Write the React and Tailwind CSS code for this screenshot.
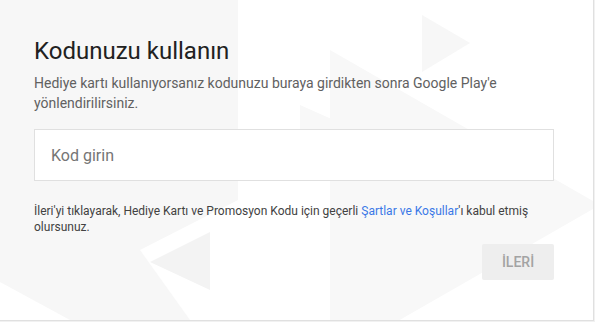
import React from "react";

// faint play-style triangles behind the card content
function CardPattern() {
  return (
    <svg
      aria-hidden
      className="pointer-events-none absolute inset-0 h-full w-full"
      viewBox="0 0 593 320"
      preserveAspectRatio="none"
    >
      <rect width="593" height="320" fill="#ffffff" />
      <polygon points="0,0 238,0 238,320 70,320 0,282" fill="#f7f7f7" />
      <polygon points="238,0 380,17 238,90" fill="#ffffff" />
      <polygon points="140,250 238,200 238,320 190,320" fill="#ffffff" />
      <polygon points="330,50 600,205 330,360" fill="#f8f8f8" />
      <polygon points="422,15 470,43 422,72" fill="#f7f7f7" />
      <polygon points="300,105 345,125 300,150" fill="#f8f8f8" />
      <polygon points="150,262 210,232 210,290" fill="#f3f3f3" />
    </svg>
  );
}

export default function App() {
  return (
    <div
      className="h-[322px] w-[595px] overflow-hidden bg-[#f1f1f1]"
      style={{ fontFamily: "Roboto, 'Noto Sans', sans-serif" }}
    >
      <div className="relative h-[321px] w-[594px] border-b border-r border-[#e0e0e0]">
        <CardPattern />

        <div className="relative flex w-[554px] flex-col pl-[34px] pt-[35px]">
          <h1 className="text-[24px] leading-[32px] font-normal text-[#212121]">
            Kodunuzu kullanın
          </h1>
          <p className="mt-[6px] text-[14px] leading-[20px] text-[#616161]">
            Hediye kartı kullanıyorsanız kodunuzu buraya girdikten sonra Google Play'e
            yönlendirilirsiniz.
          </p>

          <input
            type="text"
            placeholder="Kod girin"
            className="mt-[16px] h-[52px] w-[520px] border border-[#e0e0e0] bg-white px-[16px] text-[16px] text-[#212121] outline-none placeholder:text-[#757575]"
          />

          <p className="mt-[22px] text-[12px] leading-[16px] text-[#424242]">
            İleri'yi tıklayarak, Hediye Kartı ve Promosyon Kodu için geçerli{" "}
            <a href="#" className="text-[#3b78e7] no-underline">
              Şartlar ve Koşullar
            </a>
            'ı kabul etmiş olursunuz.
          </p>

          <div className="mt-[9px] flex justify-end">
            <button
              type="button"
              disabled
              className="h-[36px] w-[72px] rounded-[2px] bg-[#eeeeee] text-[14px] font-medium text-[#a3a3a3]"
            >
              İLERİ
            </button>
          </div>
        </div>
      </div>
    </div>
  );
}
